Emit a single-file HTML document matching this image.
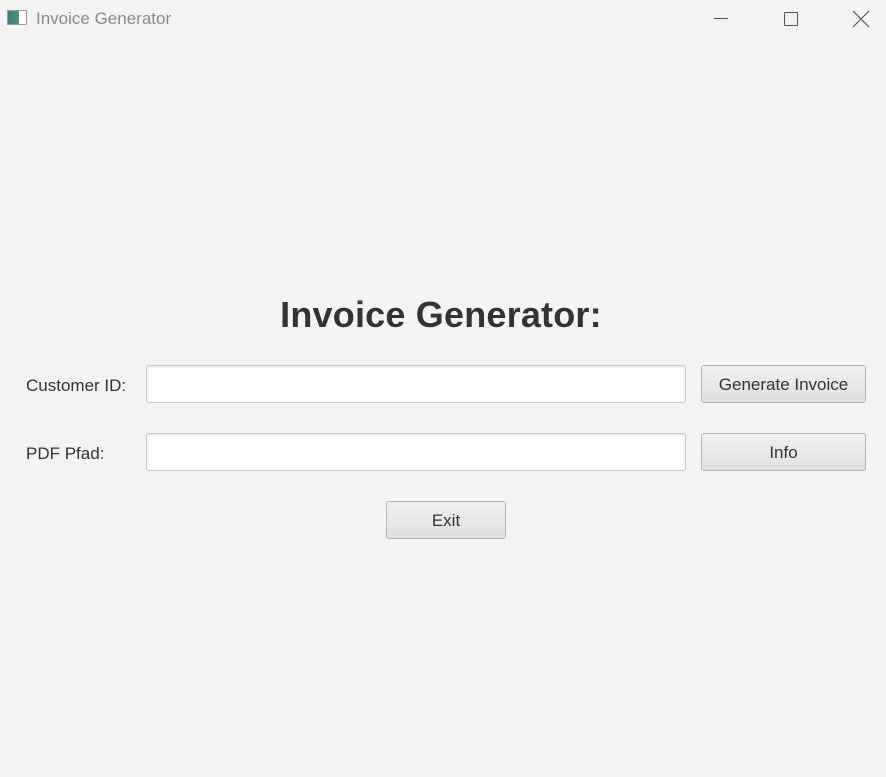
<!DOCTYPE html>
<html><head><style>
html,body{margin:0;padding:0;width:886px;height:777px;background:#f3f3f3;overflow:hidden;font-family:"Liberation Sans",sans-serif;position:relative}
.a{position:absolute}
.title{left:36px;top:9px;font-size:17px;color:#8a8a8a}
.h{left:0;width:882px;top:294px;text-align:center;font-size:36px;font-weight:bold;color:#333;letter-spacing:0.2px}
.lbl{font-size:17px;color:#333}
.in{background:#fff;border:1px solid #c8c8c8;border-radius:3px;box-shadow:inset 0 1px 2px #ddd}
.btn{border:1px solid #b5b5b5;border-radius:3px;background:linear-gradient(#f0f0f0,#e0e0e0);font-size:17px;color:#333;text-align:center;box-sizing:border-box;line-height:38px}
</style></head><body>
<div class="a" style="left:7px;top:10px;width:20px;height:15px;border:1px solid #999;box-sizing:border-box;background:linear-gradient(90deg,#3a7a8a 0,#4a9a6a 60%,#fff 60%)"></div>
<div class="a title">Invoice Generator</div>
<div class="a" style="left:714px;top:18px;width:14px;height:1px;background:#555"></div>
<div class="a" style="left:784px;top:12px;width:12px;height:12px;border:1px solid #555;border-radius:1px"></div>
<svg class="a" style="left:852px;top:10px" width="18" height="18"><path d="M1 1L17 17M17 1L1 17" stroke="#555" stroke-width="1.2"/></svg>
<div class="a h">Invoice Generator:</div>
<div class="a lbl" style="left:26px;top:376px">Customer ID:</div>
<div class="a lbl" style="left:26px;top:444px">PDF Pfad:</div>
<div class="a in" style="left:146px;top:365px;width:538px;height:36px"></div>
<div class="a in" style="left:146px;top:433px;width:538px;height:36px"></div>
<div class="a btn" style="left:701px;top:365px;width:165px;height:38px">Generate Invoice</div>
<div class="a btn" style="left:701px;top:433px;width:165px;height:38px">Info</div>
<div class="a btn" style="left:386px;top:501px;width:120px;height:38px">Exit</div>
</body></html>
